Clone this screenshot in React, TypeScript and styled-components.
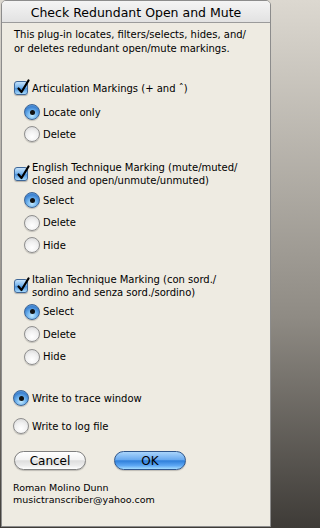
import React from "react";
import styled, { createGlobalStyle } from "styled-components";

const GlobalStyle = createGlobalStyle`
  html, body {
    margin: 0;
    padding: 0;
  }
  body {
    width: 272px;
    height: 528px;
    overflow: hidden;
    background: linear-gradient(#dcd8d0 0%, #8f8b84 60%, #3e3b37 100%);
    font-family: "DejaVu Sans", "Lucida Grande", sans-serif;
    color: #000;
  }
`;

const Window = styled.div`
  width: 268px;
  height: 525px;
  margin-left: 1px;
  border: 1px solid #8c8c8c;
  border-radius: 5px 5px 0 0;
  background: #eeebe2;
  overflow: hidden;
  display: flex;
  flex-direction: column;
`;

const TitleBar = styled.div`
  height: 22px;
  flex: none;
  border-bottom: 1px solid #9b9b9b;
  background: linear-gradient(#f4f4f4, #e2e2e2);
  display: flex;
  align-items: center;
  justify-content: center;
  font-size: 12.5px;
  padding-top: 1px;
  box-sizing: border-box;
`;

const Body = styled.div`
  padding: 5px 0 0 11px;
  display: flex;
  flex-direction: column;
`;

const Description = styled.p`
  margin: 0;
  font-size: 10px;
  line-height: 14px;
  padding-left: 1px;
`;

const CheckRow = styled.label<{ $top: number }>`
  display: flex;
  align-items: center;
  gap: 4px;
  margin-top: ${(p) => p.$top}px;
  margin-left: 1px;
  font-size: 10px;
  line-height: 13px;
`;

const Box = styled.span`
  position: relative;
  flex: none;
  width: 14px;
  height: 14px;
  box-sizing: border-box;
  border: 1px solid #3f6899;
  border-radius: 3px;
  background: linear-gradient(#c4e2fb 0%, #79b5ec 45%, #4c93dc 55%, #a8dafc 100%);
  box-shadow: 0 1px 1px rgba(0, 0, 0, 0.25);

  svg {
    position: absolute;
    left: 1px;
    top: -3px;
  }
`;

const RadioGroup = styled.div<{ $top: number; $indent: number }>`
  display: flex;
  flex-direction: column;
  margin-top: ${(p) => p.$top}px;
  margin-left: ${(p) => p.$indent}px;
`;

const RadioRow = styled.label<{ $h: number }>`
  display: flex;
  align-items: center;
  gap: 3px;
  height: ${(p) => p.$h}px;
  font-size: 10px;
`;

const Dot = styled.span<{ $on: boolean }>`
  flex: none;
  width: 16px;
  height: 16px;
  box-sizing: border-box;
  border-radius: 50%;
  display: flex;
  align-items: center;
  justify-content: center;
  border: 1px solid ${(p) => (p.$on ? "#3d6596" : "#8e8e8e")};
  background: ${(p) =>
    p.$on
      ? "radial-gradient(circle at 50% 75%, #c4eaff 0%, #6cb0ec 40%, #3b80cf 70%, #8cc4f2 100%)"
      : "radial-gradient(circle at 50% 70%, #ffffff 0%, #f0f0f0 50%, #d2d2d2 100%)"};
  box-shadow: 0 1px 1px rgba(0, 0, 0, 0.2);

  &::after {
    content: "";
    display: ${(p) => (p.$on ? "block" : "none")};
    width: 5px;
    height: 5px;
    border-radius: 50%;
    background: #111;
  }
`;

const Buttons = styled.div`
  display: flex;
  gap: 28px;
  margin-top: 11px;
  margin-left: 1px;
`;

const Pill = styled.button<{ $primary?: boolean }>`
  width: 72px;
  height: 19px;
  padding: 0;
  border-radius: 10px;
  font-family: "DejaVu Sans", "Lucida Grande", sans-serif;
  font-size: 12px;
  color: #000;
  border: 1px solid ${(p) => (p.$primary ? "#2f568c" : "#808080")};
  background: ${(p) =>
    p.$primary
      ? "linear-gradient(#a9d4fb 0%, #6aaaf0 45%, #2f7fda 52%, #5ea8f4 80%, #a4dcff 100%)"
      : "linear-gradient(#ffffff 0%, #f3f3f3 45%, #dedede 52%, #ececec 80%, #ffffff 100%)"};
  box-shadow: 0 1px 1px rgba(0, 0, 0, 0.2);
`;

const Credits = styled.div`
  margin-top: 12px;
  font-size: 9.5px;
  line-height: 11.5px;
`;

const CheckMark = () => (
  <svg width="15" height="16" viewBox="0 0 15 16">
    <path
      d="M2.5 9.5 L5.5 13 L12.5 1.5"
      fill="none"
      stroke="#000"
      strokeWidth="2.2"
      strokeLinecap="round"
      strokeLinejoin="round"
    />
  </svg>
);

type Option = { label: string; on?: boolean };

const Radios = ({ options, top, indent, h }: { options: Option[]; top: number; indent: number; h: number }) => (
  <RadioGroup $top={top} $indent={indent}>
    {options.map((o) => (
      <RadioRow key={o.label} $h={h}>
        <Dot $on={!!o.on} />
        {o.label}
      </RadioRow>
    ))}
  </RadioGroup>
);

const Check = ({ top, children }: { top: number; children: React.ReactNode }) => (
  <CheckRow $top={top}>
    <Box>
      <CheckMark />
    </Box>
    <span>{children}</span>
  </CheckRow>
);

export default function App() {
  return (
    <>
      <GlobalStyle />
      <Window>
        <TitleBar>Check Redundant Open and Mute</TitleBar>
        <Body>
          <Description>
            This plug-in locates, filters/selects, hides, and/
            <br />
            or deletes redundant open/mute markings.
          </Description>

          <Check top={25}>Articulation Markings (+ and ˆ)</Check>
          <Radios top={6} indent={11} h={22} options={[{ label: "Locate only", on: true }, { label: "Delete" }]} />

          <Check top={16}>
            English Technique Marking (mute/muted/
            <br />
            closed and open/unmute/unmuted)
          </Check>
          <Radios
            top={2}
            indent={11}
            h={22.5}
            options={[{ label: "Select", on: true }, { label: "Delete" }, { label: "Hide" }]}
          />

          <Check top={16}>
            Italian Technique Marking (con sord./
            <br />
            sordino and senza sord./sordino)
          </Check>
          <Radios
            top={2}
            indent={11}
            h={22.5}
            options={[{ label: "Select", on: true }, { label: "Delete" }, { label: "Hide" }]}
          />

          <Radios
            top={16}
            indent={0}
            h={28}
            options={[{ label: "Write to trace window", on: true }, { label: "Write to log file" }]}
          />

          <Buttons>
            <Pill>Cancel</Pill>
            <Pill $primary>OK</Pill>
          </Buttons>

          <Credits>
            Roman Molino Dunn
            <br />
            musictranscriber@yahoo.com
          </Credits>
        </Body>
      </Window>
    </>
  );
}
